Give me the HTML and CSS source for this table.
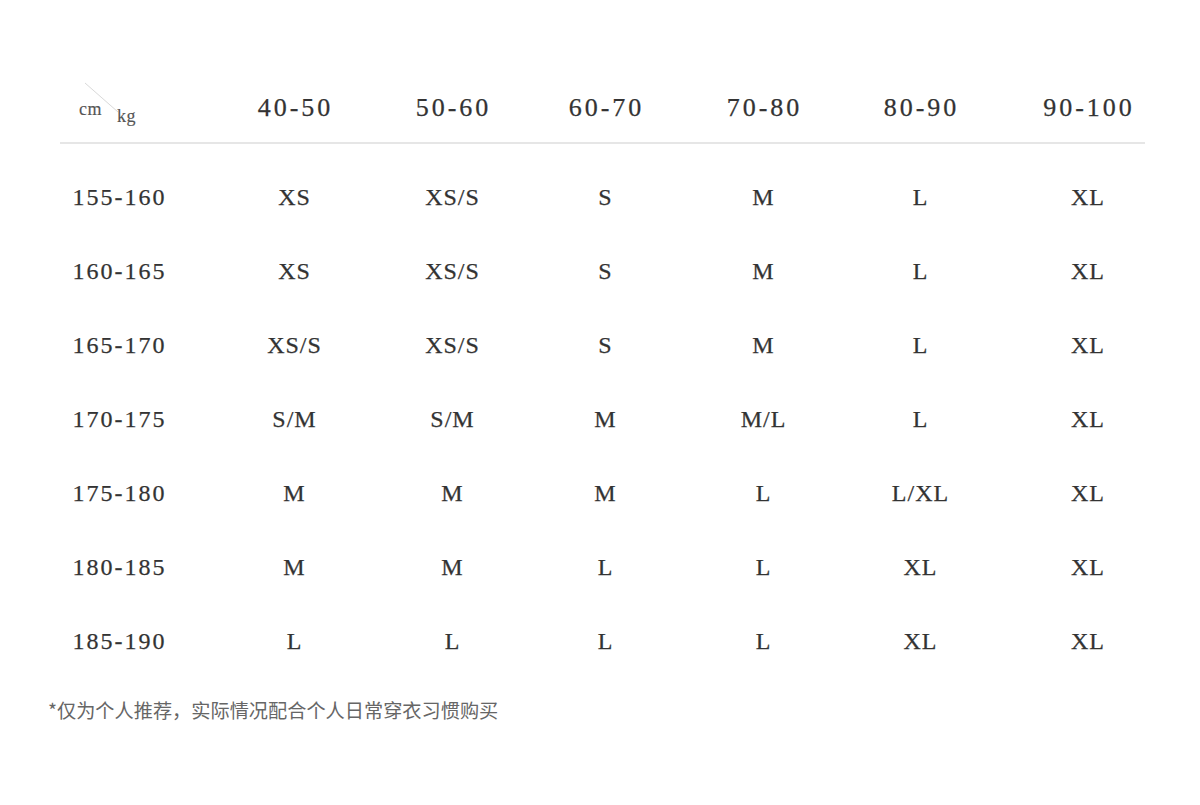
FILE: index.html
```html
<!DOCTYPE html>
<html lang="zh">
<head>
<meta charset="utf-8">
<title>尺码表</title>
<link rel="stylesheet" href="styles.css">
</head>
<body>
<div class="page">
  <div class="table">
    <div class="row head">
      <div class="cell corner">
        <svg class="diag" width="40" height="34" viewBox="0 0 40 34"><line x1="1" y1="1" x2="34" y2="30" stroke="#d9d9d9" stroke-width="1"/></svg>
        <span class="cm">cm</span>
        <span class="kg">kg</span>
      </div>
      <div class="cell">40-50</div>
      <div class="cell">50-60</div>
      <div class="cell">60-70</div>
      <div class="cell">70-80</div>
      <div class="cell">80-90</div>
      <div class="cell">90-100</div>
    </div>
    <div class="body">
      <div class="row"><div class="cell label">155-160</div><div class="cell">XS</div><div class="cell">XS/S</div><div class="cell">S</div><div class="cell">M</div><div class="cell">L</div><div class="cell">XL</div></div>
      <div class="row"><div class="cell label">160-165</div><div class="cell">XS</div><div class="cell">XS/S</div><div class="cell">S</div><div class="cell">M</div><div class="cell">L</div><div class="cell">XL</div></div>
      <div class="row"><div class="cell label">165-170</div><div class="cell">XS/S</div><div class="cell">XS/S</div><div class="cell">S</div><div class="cell">M</div><div class="cell">L</div><div class="cell">XL</div></div>
      <div class="row"><div class="cell label">170-175</div><div class="cell">S/M</div><div class="cell">S/M</div><div class="cell">M</div><div class="cell">M/L</div><div class="cell">L</div><div class="cell">XL</div></div>
      <div class="row"><div class="cell label">175-180</div><div class="cell">M</div><div class="cell">M</div><div class="cell">M</div><div class="cell">L</div><div class="cell">L/XL</div><div class="cell">XL</div></div>
      <div class="row"><div class="cell label">180-185</div><div class="cell">M</div><div class="cell">M</div><div class="cell">L</div><div class="cell">L</div><div class="cell">XL</div><div class="cell">XL</div></div>
      <div class="row"><div class="cell label">185-190</div><div class="cell">L</div><div class="cell">L</div><div class="cell">L</div><div class="cell">L</div><div class="cell">XL</div><div class="cell">XL</div></div>
    </div>
  </div>
  <p class="note">*仅为个人推荐，实际情况配合个人日常穿衣习惯购买</p>
</div>
</body>
</html>
```

FILE: styles.css
```css
* { box-sizing: border-box; }
html, body { margin: 0; padding: 0; background: #ffffff; }
.page {
  width: 1200px;
  height: 805px;
  padding: 74px 55px 0 48px;
  font-family: "Liberation Serif", "DejaVu Serif", serif;
  color: #333333;
}
.table {
  margin-left: 12px;
  width: 1085px;
  -webkit-text-stroke: 0.25px #333333;
}
.row {
  display: grid;
  grid-template-columns: 118px 232px 84px 222px 94px 220px 115px;
  align-items: center;
}
.head {
  height: 70px;
  border-bottom: 2px solid #e6e6e6;
  font-size: 26px;
  letter-spacing: 3px;
}
.body { padding-top: 16px; }
.body .row {
  height: 74px;
  font-size: 24px;
  letter-spacing: 1px;
}
.cell {
  text-align: center;
  white-space: nowrap;
  line-height: 1;
}
.head .cell { padding-left: 3px; }
.body .cell { padding-left: 1px; }
.label { letter-spacing: 2px; }
.corner {
  position: relative;
  height: 100%;
}
.diag { position: absolute; left: 24px; top: 8px; }
.cm, .kg {
  position: absolute;
  font-size: 18px;
  letter-spacing: 0.5px;
  color: #555555;
  -webkit-text-stroke: 0.15px #555555;
  line-height: 1;
}
.cm { left: 19px; top: 26px; }
.kg { left: 57px; top: 33px; }
.note {
  margin: 23px 0 0 0;
  font-family: "Noto Sans CJK SC", "Noto Sans", sans-serif;
  font-size: 19.2px;
  color: #666666;
  line-height: 1;
}
```
